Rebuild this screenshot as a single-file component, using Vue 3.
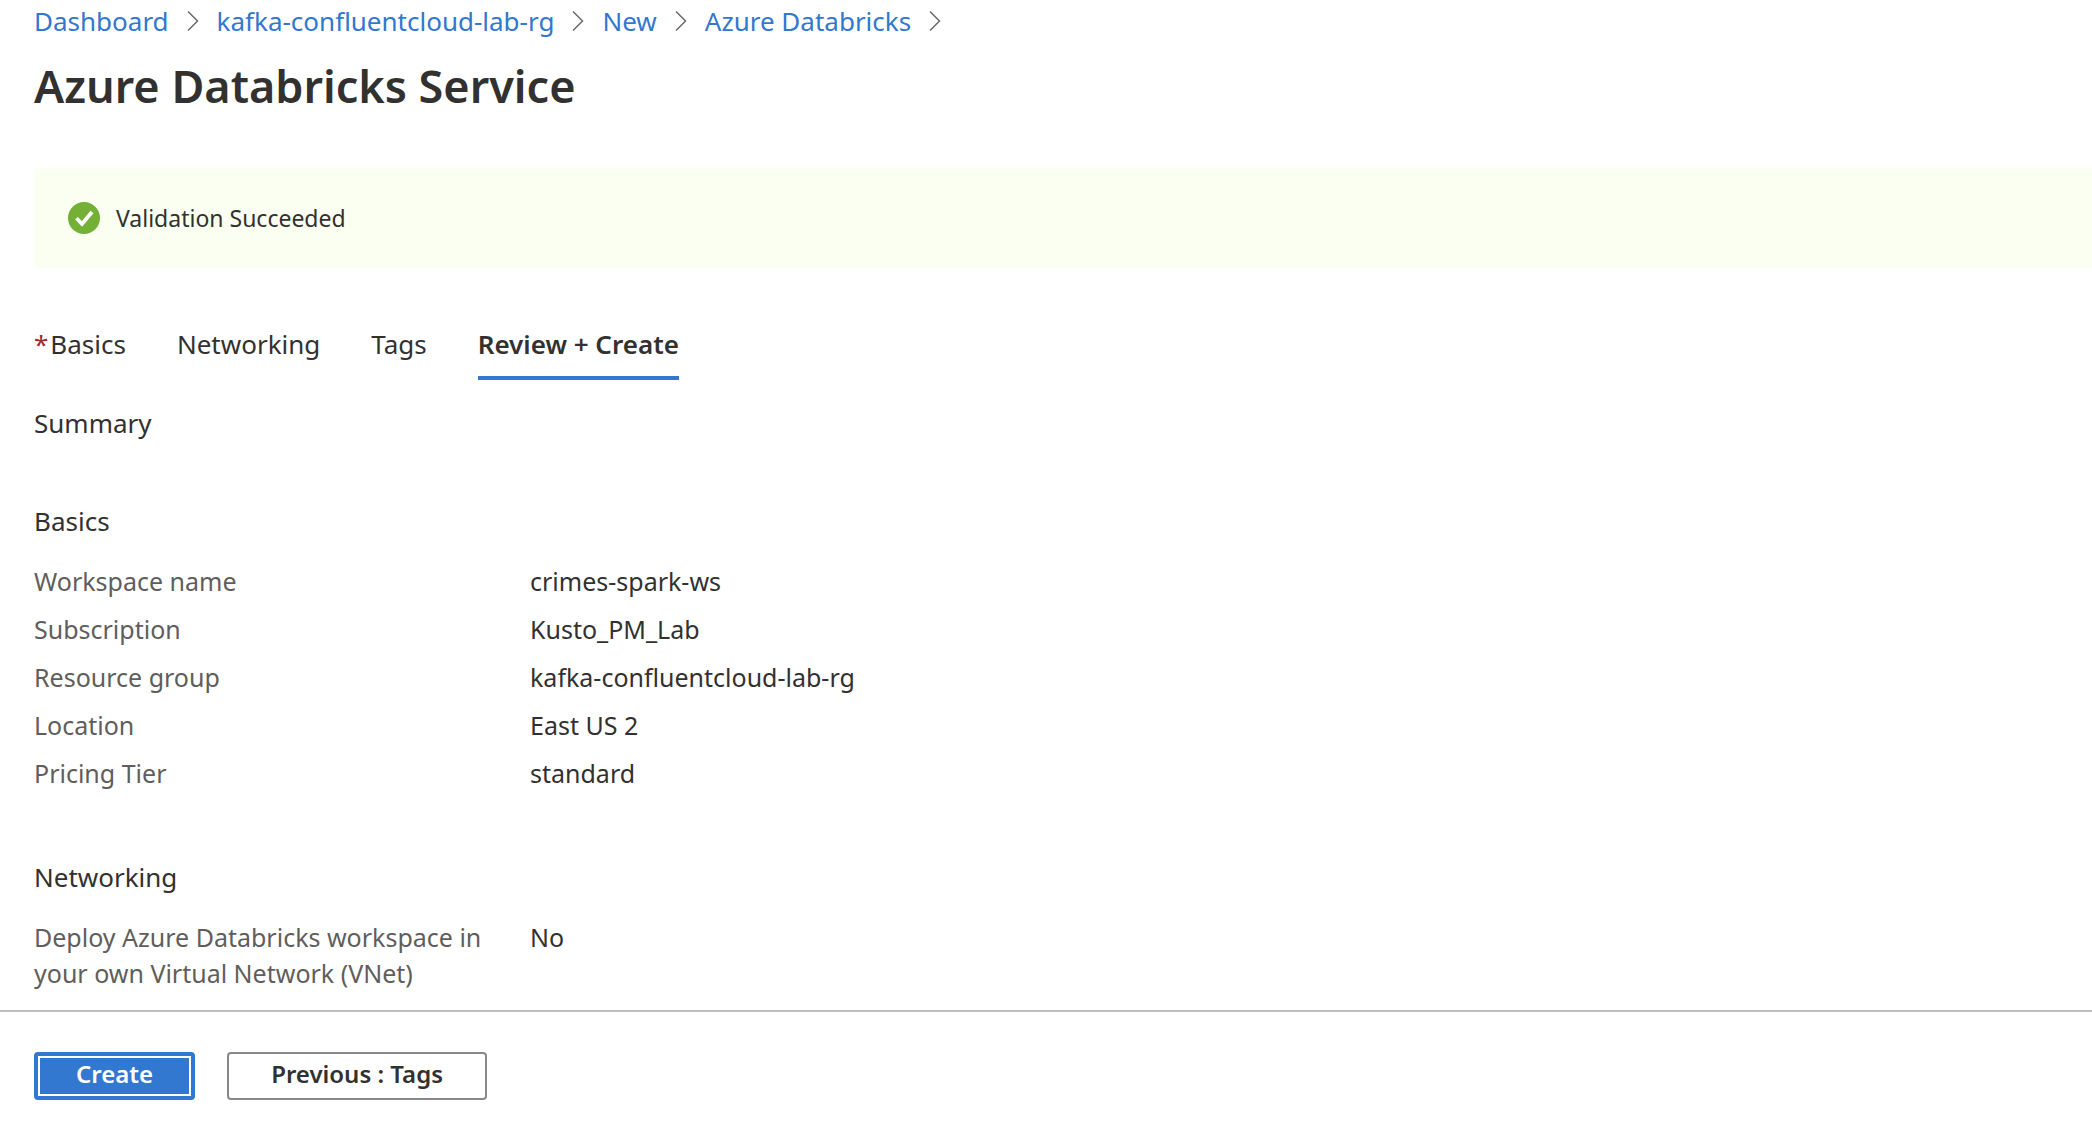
<script setup>
const crumbs = ['Dashboard', 'kafka-confluentcloud-lab-rg', 'New', 'Azure Databricks']

const tabs = [
  { label: 'Basics', required: true },
  { label: 'Networking' },
  { label: 'Tags' },
  { label: 'Review + Create', active: true },
]

const sections = [
  {
    title: 'Basics',
    rows: [
      ['Workspace name', 'crimes-spark-ws'],
      ['Subscription', 'Kusto_PM_Lab'],
      ['Resource group', 'kafka-confluentcloud-lab-rg'],
      ['Location', 'East US 2'],
      ['Pricing Tier', 'standard'],
    ],
  },
  {
    title: 'Networking',
    rows: [['Deploy Azure Databricks workspace in your own Virtual Network (VNet)', 'No']],
  },
]
</script>

<template>
  <div class="page">
    <main class="content">
      <nav class="crumbs" aria-label="Breadcrumb">
        <template v-for="crumb in crumbs" :key="crumb">
          <a href="#">{{ crumb }}</a>
          <svg class="chevron" width="12" height="22" viewBox="0 0 12 22" aria-hidden="true">
            <path d="M1 1.5 10.5 11 1 20.5" fill="none" stroke="#6b6a69" stroke-width="1.5" />
          </svg>
        </template>
      </nav>
      <h1>Azure Databricks Service</h1>

      <div class="banner" role="status">
        <svg width="32" height="32" viewBox="0 0 32 32" aria-hidden="true">
          <circle cx="16" cy="16" r="16" fill="#73b035" />
          <path d="M8.5 16.2 14 22 24 10" fill="none" stroke="#fff" stroke-width="3.8" />
        </svg>
        <span>Validation Succeeded</span>
      </div>

      <div class="tabs" role="tablist">
        <button
          v-for="tab in tabs"
          :key="tab.label"
          type="button"
          role="tab"
          class="tab"
          :class="{ active: tab.active }"
          :aria-selected="!!tab.active"
        >
          <span v-if="tab.required" class="required">*</span>{{ tab.label }}
        </button>
      </div>

      <h2 class="summary">Summary</h2>

      <section v-for="section in sections" :key="section.title">
        <h2>{{ section.title }}</h2>
        <dl>
          <div v-for="[name, value] in section.rows" :key="name" class="row">
            <dt>{{ name }}</dt>
            <dd>{{ value }}</dd>
          </div>
        </dl>
      </section>
    </main>

    <footer>
      <button type="button" class="btn primary">Create</button>
      <button type="button" class="btn">Previous : Tags</button>
    </footer>
  </div>
</template>

<style>
body {
  margin: 0;
  background: #fff;
}
</style>

<style scoped>
.page {
  display: flex;
  flex-direction: column;
  min-height: 100vh;
  color: #323130;
  font-family: 'Noto Sans', 'Open Sans', sans-serif;
  font-size: 25px;
  line-height: 36px;
}

.content {
  flex: 1;
  padding: 1px 0 18px 34px;
}

.crumbs {
  display: flex;
  align-items: center;
  gap: 18px;
  font-size: 26px;
  line-height: 40px;
}

.crumbs a {
  color: #3277d0;
  text-decoration: none;
}

.chevron {
  flex: none;
}

h1 {
  margin: 13px 0 50px;
  font-size: 45px;
  font-weight: 600;
  line-height: 64px;
}

.banner {
  display: flex;
  align-items: center;
  gap: 16px;
  padding: 32px 34px;
  border-radius: 4px 0 0 4px;
  background: #fbfff1;
  font-size: 23px;
}

.tabs {
  display: flex;
  gap: 51px;
  margin-top: 56px;
}

.tab {
  padding: 0 0 12px;
  border: 0;
  border-bottom: 4px solid transparent;
  background: none;
  color: inherit;
  font: inherit;
  font-size: 26px;
  line-height: 40px;
}

.tab.active {
  border-bottom-color: #3277d0;
  font-weight: 600;
}

.required {
  margin-right: 2px;
  color: #a4262c;
}

h2 {
  margin: 58px 0 22px;
  font-size: 26px;
  font-weight: 400;
  line-height: 40px;
}

.summary {
  margin: 23px 0 0;
}

dl {
  display: flex;
  flex-direction: column;
  gap: 12px;
  margin: 0;
}

section + section h2 {
  margin-top: 66px;
}

.row {
  display: flex;
  gap: 48px;
}

dt {
  flex: none;
  width: 448px;
  color: #605e5c;
}

dd {
  margin: 0;
}

footer {
  display: flex;
  gap: 32px;
  padding: 40px 34px 32px;
  border-top: 2px solid #bebebe;
}

.btn {
  height: 48px;
  padding: 0 42px 4px;
  border: 2px solid #8a8886;
  border-radius: 4px;
  background: #fff;
  color: #323130;
  font: inherit;
  font-size: 24px;
  font-weight: 600;
  line-height: 36px;
}

.primary {
  padding: 0 38px 4px;
  border: 4px solid #3277d0;
  background: #3277d0;
  color: #fff;
  box-shadow: inset 0 0 0 2px #fff;
}
</style>
